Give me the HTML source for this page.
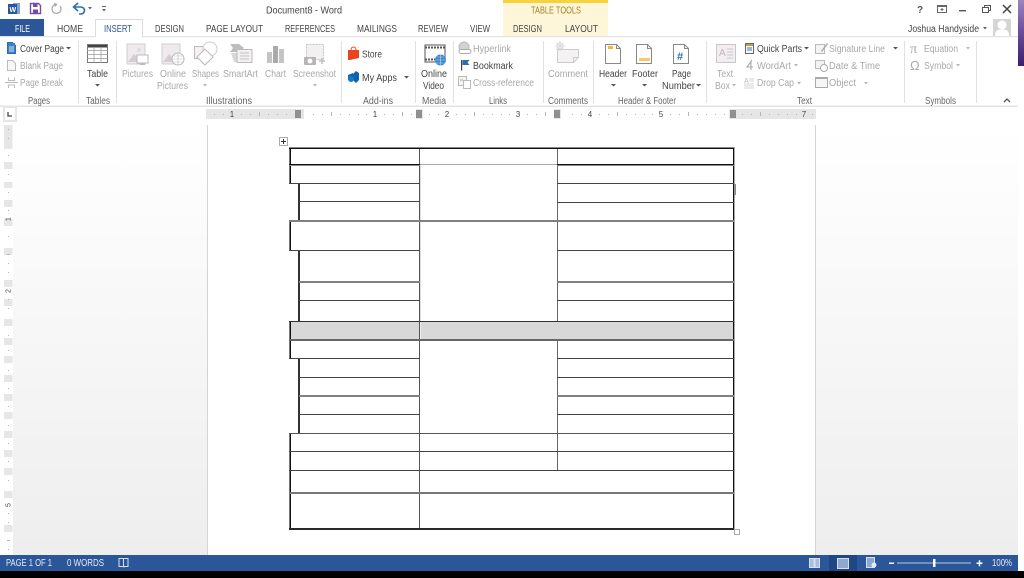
<!DOCTYPE html>
<html><head><meta charset="utf-8"><title>Document8 - Word</title>
<style>
html,body{margin:0;padding:0;background:#fff;width:1024px;height:578px;overflow:hidden}
svg{display:block;position:absolute;left:0;top:0;filter:blur(.3px)}
text{font-family:"Liberation Sans",sans-serif;font-size:10px}
.d{fill:#444}.g{fill:#a8a8a8}.l{fill:#666}.w{fill:#e4ebf5}
.c{fill:#555}.cg{fill:#b5b5b5}
</style></head><body>
<svg width="1024" height="578" viewBox="0 0 1024 578" xmlns="http://www.w3.org/2000/svg">
<defs>
<linearGradient id="bg" x1="0" y1="0" x2="0" y2="1"><stop offset="0" stop-color="#fff"/><stop offset="1" stop-color="#eee"/></linearGradient>
<linearGradient id="pur" x1="0" y1="0" x2="0" y2="1"><stop offset="0" stop-color="#9a86bd"/><stop offset=".5" stop-color="#6b4a9a"/><stop offset="1" stop-color="#3c1c6e"/></linearGradient>
</defs>
<rect width="1024" height="578" fill="#fff"/>
<rect x="1018" y="0" width="6" height="66" fill="url(#pur)"/>

<!-- doc background -->
<rect x="13" y="125" width="1005" height="430" fill="url(#bg)"/>
<rect x="207" y="125" width="609" height="430" fill="#fff"/>
<rect x="207" y="125" width="1" height="430" fill="#d4d4d4"/>
<rect x="815" y="125" width="1" height="430" fill="#d4d4d4"/>

<!-- title bar icons -->
<g>
<rect x="13" y="3" width="7" height="11" fill="#7da3d8"/><rect x="8" y="4" width="9" height="10" fill="#2b579a"/>
<text x="9.5" y="12" fill="#fff" style="font-size:7px" font-weight="bold">W</text>
<path d="M30.5 3.500h8l2 2v8h-10z" fill="none" stroke="#7a4aa8" stroke-width="1.4"/><rect x="33" y="4" width="4.500" height="3" fill="#7a4aa8"/><rect x="33" y="9.500" width="5" height="3.500" fill="#7a4aa8"/>
<path d="M60 6a4.500 4.500 0 1 1-3-1.600" fill="none" stroke="#a8a8a8" stroke-width="1.200"/><path d="M54 2.500l3.500 2-2.500 2.500z" fill="#a8a8a8"/>
<path d="M75 7h6a3.500 3.500 0 0 1 0 7h-2" fill="none" stroke="#2b6cb0" stroke-width="1.600"/><path d="M78 3l-4.500 4 4.500 4" fill="none" stroke="#2b6cb0" stroke-width="1.600"/>
<path d="M88 7h4l-2 2.500z" fill="#666"/>
<rect x="102" y="6" width="4" height="1" fill="#666"/><path d="M102 9h4l-2 2.500z" fill="#666"/>
</g>
<text class="d" x="266" y="13.500" textLength="76" lengthAdjust="spacingAndGlyphs">Document8 - Word</text>

<!-- contextual tab -->
<rect x="503" y="0" width="105" height="36" fill="#fdf6d9"/>
<rect x="503" y="0" width="105" height="3" fill="#f8d23c"/>
<text x="531" y="13.500" fill="#a5801f" textLength="50" lengthAdjust="spacingAndGlyphs">TABLE TOOLS</text>

<!-- ribbon tabs -->
<rect x="0" y="19" width="44" height="18" fill="#2b579a"/>
<text x="15" y="32" fill="#fff" textLength="15" lengthAdjust="spacingAndGlyphs">FILE</text>
<rect x="0" y="36" width="1018" height="1.200" fill="#e2e2e2"/>
<path d="M95.500 37V19.500H142.500V37" fill="#fff" stroke="#dcdcdc"/>
<rect x="96" y="36" width="46" height="2" fill="#fff"/>
<g class="d">
<text x="57" y="32" textLength="26" lengthAdjust="spacingAndGlyphs">HOME</text>
<text x="155" y="32" textLength="29" lengthAdjust="spacingAndGlyphs">DESIGN</text>
<text x="206" y="32" textLength="57" lengthAdjust="spacingAndGlyphs">PAGE LAYOUT</text>
<text x="285" y="32" textLength="50" lengthAdjust="spacingAndGlyphs">REFERENCES</text>
<text x="357" y="32" textLength="40" lengthAdjust="spacingAndGlyphs">MAILINGS</text>
<text x="418" y="32" textLength="30" lengthAdjust="spacingAndGlyphs">REVIEW</text>
<text x="470" y="32" textLength="20" lengthAdjust="spacingAndGlyphs">VIEW</text>
<text x="513" y="32" textLength="29" lengthAdjust="spacingAndGlyphs">DESIGN</text>
<text x="565" y="32" textLength="33" lengthAdjust="spacingAndGlyphs">LAYOUT</text>
<text x="908" y="32" textLength="71" lengthAdjust="spacingAndGlyphs">Joshua Handyside</text>
</g>
<text x="104" y="32" fill="#2b579a" textLength="28" lengthAdjust="spacingAndGlyphs">INSERT</text>

<!-- window controls -->
<text x="917" y="13" fill="#555" font-weight="bold" style="font-size:10px">?</text>
<rect x="937.500" y="5.500" width="9" height="7" fill="none" stroke="#666"/><rect x="937" y="5" width="10" height="2" fill="#666"/><path d="M942 8v3M940.500 9.500h3" stroke="#666"/>
<rect x="959" y="10" width="7" height="1.400" fill="#555"/>
<path d="M982.500 7.500h6v5h-6zM984.500 7.500v-2h6v5h-2" fill="none" stroke="#555"/>
<path d="M1003 5l8 8M1011 5l-8 8" stroke="#444" stroke-width="1.500"/>
<path d="M983 27h4l-2 2.500z" fill="#666"/>
<rect x="993" y="19" width="18" height="17" fill="#d5d5d5"/>
<circle cx="1002" cy="25" r="4.500" fill="#fff"/><path d="M995 36c0-6 3-6.500 7-6.500s7 .5 7 6.500z" fill="#fff"/>

<!-- ribbon bottom -->
<rect x="0" y="105.500" width="1018" height="1.500" fill="#e3e3e3"/>
<g fill="#e1e1e1">
<rect x="78" y="41" width="1" height="62"/><rect x="116" y="41" width="1" height="62"/><rect x="341" y="41" width="1" height="62"/><rect x="415" y="41" width="1" height="62"/><rect x="453" y="41" width="1" height="62"/><rect x="543" y="41" width="1" height="62"/><rect x="593" y="41" width="1" height="62"/><rect x="706" y="41" width="1" height="62"/><rect x="904" y="41" width="1" height="62"/><rect x="976" y="41" width="1" height="62"/>
</g>

<!-- group labels -->
<g class="l">
<text x="28" y="104" textLength="22" lengthAdjust="spacingAndGlyphs">Pages</text>
<text x="86" y="104" textLength="24" lengthAdjust="spacingAndGlyphs">Tables</text>
<text x="206" y="104" textLength="46" lengthAdjust="spacingAndGlyphs">Illustrations</text>
<text x="363" y="104" textLength="30" lengthAdjust="spacingAndGlyphs">Add-ins</text>
<text x="422" y="104" textLength="24" lengthAdjust="spacingAndGlyphs">Media</text>
<text x="489" y="104" textLength="18" lengthAdjust="spacingAndGlyphs">Links</text>
<text x="548" y="104" textLength="40" lengthAdjust="spacingAndGlyphs">Comments</text>
<text x="618" y="104" textLength="58" lengthAdjust="spacingAndGlyphs">Header &amp; Footer</text>
<text x="797" y="104" textLength="15" lengthAdjust="spacingAndGlyphs">Text</text>
<text x="925" y="104" textLength="31" lengthAdjust="spacingAndGlyphs">Symbols</text>
</g>
<path d="M1004 102l3-3 3 3" fill="none" stroke="#555" stroke-width="1.300"/>

<!-- ribbon text -->
<g class="d">
<text x="20" y="52" textLength="44" lengthAdjust="spacingAndGlyphs">Cover Page</text>
<text x="87" y="77" textLength="21" lengthAdjust="spacingAndGlyphs">Table</text>
<text x="362" y="57.500" textLength="20" lengthAdjust="spacingAndGlyphs">Store</text>
<text x="362" y="81" textLength="35" lengthAdjust="spacingAndGlyphs">My Apps</text>
<text x="421" y="77" textLength="26" lengthAdjust="spacingAndGlyphs">Online</text>
<text x="423" y="89" textLength="21" lengthAdjust="spacingAndGlyphs">Video</text>
<text x="473" y="69" textLength="40" lengthAdjust="spacingAndGlyphs">Bookmark</text>
<text x="599" y="77" textLength="28" lengthAdjust="spacingAndGlyphs">Header</text>
<text x="632" y="77" textLength="26" lengthAdjust="spacingAndGlyphs">Footer</text>
<text x="672" y="77" textLength="19" lengthAdjust="spacingAndGlyphs">Page</text>
<text x="662" y="89" textLength="33" lengthAdjust="spacingAndGlyphs">Number</text>
<text x="757" y="52" textLength="45" lengthAdjust="spacingAndGlyphs">Quick Parts</text>
</g>
<g class="g">
<text x="20" y="69" textLength="43" lengthAdjust="spacingAndGlyphs">Blank Page</text>
<text x="20" y="86" textLength="43" lengthAdjust="spacingAndGlyphs">Page Break</text>
<text x="122" y="77" textLength="31" lengthAdjust="spacingAndGlyphs">Pictures</text>
<text x="160" y="77" textLength="26" lengthAdjust="spacingAndGlyphs">Online</text>
<text x="157" y="89" textLength="31" lengthAdjust="spacingAndGlyphs">Pictures</text>
<text x="192" y="77" textLength="27" lengthAdjust="spacingAndGlyphs">Shapes</text>
<text x="223" y="77" textLength="35" lengthAdjust="spacingAndGlyphs">SmartArt</text>
<text x="265" y="77" textLength="21" lengthAdjust="spacingAndGlyphs">Chart</text>
<text x="293" y="77" textLength="43" lengthAdjust="spacingAndGlyphs">Screenshot</text>
<text x="473" y="52" textLength="38" lengthAdjust="spacingAndGlyphs">Hyperlink</text>
<text x="473" y="86" textLength="61" lengthAdjust="spacingAndGlyphs">Cross-reference</text>
<text x="548" y="77" textLength="40" lengthAdjust="spacingAndGlyphs">Comment</text>
<text x="717" y="77" textLength="16" lengthAdjust="spacingAndGlyphs">Text</text>
<text x="715" y="89" textLength="15" lengthAdjust="spacingAndGlyphs">Box</text>
<text x="757" y="69" textLength="34" lengthAdjust="spacingAndGlyphs">WordArt</text>
<text x="757" y="86" textLength="37" lengthAdjust="spacingAndGlyphs">Drop Cap</text>
<text x="829" y="52" textLength="56" lengthAdjust="spacingAndGlyphs">Signature Line</text>
<text x="829" y="69" textLength="51" lengthAdjust="spacingAndGlyphs">Date &amp; Time</text>
<text x="829" y="86" textLength="27" lengthAdjust="spacingAndGlyphs">Object</text>
<text x="924" y="52" textLength="34" lengthAdjust="spacingAndGlyphs">Equation</text>
<text x="924" y="69" textLength="29" lengthAdjust="spacingAndGlyphs">Symbol</text>
</g>

<!-- carets -->
<g class="c">
<path d="M66 47h5l-2.500 2.500z"/><path d="M95 84h5l-2.500 2.500z"/><path d="M404 76h5l-2.500 2.500z"/><path d="M611 84h5l-2.500 2.500z"/><path d="M642 84h5l-2.500 2.500z"/><path d="M696 84h5l-2.500 2.500z"/><path d="M804 47h5l-2.500 2.500z"/><path d="M893 47h5l-2.500 2.500z"/>
</g>
<g class="cg">
<path d="M203 84h4l-2 2.500z"/><path d="M313 84h4l-2 2.500z"/><path d="M732 84h4l-2 2.500z"/><path d="M794 64h4l-2 2.500z"/><path d="M797 82h4l-2 2.500z"/><path d="M864 82h4l-2 2.500z"/><path d="M966 47h4l-2 2.500z"/><path d="M956 64h4l-2 2.500z"/>
</g>

<!-- Pages icons -->
<path d="M7.500 42.500h5l3 3v8h-8z" fill="#fff" stroke="#2b6cb0"/><rect x="8" y="43" width="7" height="10" fill="#3f7fc4"/><path d="M9 47h5M9 49h5M9 51h5" stroke="#fff" stroke-width=".8"/>
<path d="M7.500 60.500h5l3 3v7h-8z" fill="#f7f7f7" stroke="#bbb"/>
<path d="M8.500 77.500v3h6v-3M8.500 88v-3h6v3M5 82.500h13" fill="none" stroke="#bbb"/>

<!-- Table icon -->
<rect x="87" y="44" width="21" height="3.500" fill="#444"/>
<rect x="87.500" y="44.500" width="20" height="18" fill="none" stroke="#777"/>
<path d="M87 50.500h21M87 54.500h21M87 58.500h21M94 47v16M101 47v16" stroke="#999" stroke-width=".7"/>

<!-- Pictures -->
<rect x="127" y="44" width="18" height="20" fill="#f0e9ee" stroke="#cfcfcf"/><circle cx="139" cy="50" r="2" fill="#ddd"/><path d="M128 62l6-8 5 5 3-2 3 3v2z" fill="#d5cdd2"/><rect x="137" y="55" width="11" height="8" fill="#fff" stroke="#bbb"/><rect x="140" y="63" width="5" height="2" fill="#bbb"/>
<rect x="162" y="44" width="18" height="20" fill="#f0e9ee" stroke="#cfcfcf"/><path d="M163 62l6-8 5 5 3-2 3 3v2z" fill="#d5cdd2"/><circle cx="178" cy="59" r="6" fill="#fff" stroke="#bbb"/><path d="M172 59h12M178 53v12M173.500 56h9M173.500 62h9" stroke="#bbb" stroke-width=".6" fill="none"/>
<!-- Shapes -->
<rect x="194.500" y="46.500" width="12" height="12" fill="#f5f0f3" stroke="#bbb"/><circle cx="210" cy="49" r="7" fill="#fff" stroke="#ccc"/><path d="M205 49l8 8-8 8-8-8z" fill="#fff" stroke="#bbb"/>
<!-- SmartArt -->
<path d="M230 44h9l5 4-5 4h-9l3-4z" fill="#bdbdbd"/><path d="M231 53h8l4-3v12h-9z" fill="#d8d8d8"/><rect x="237" y="49.500" width="15" height="13" fill="#f3f0f2" stroke="#bbb"/><path d="M240 53h9M240 56h9M240 59h9" stroke="#c5c5c5"/>
<!-- Chart -->
<rect x="267" y="52" width="5" height="11" fill="#c4c4c4"/><rect x="273" y="46" width="5" height="17" fill="#aaa"/><rect x="279" y="49" width="5" height="14" fill="#c4c4c4"/>
<!-- Screenshot -->
<rect x="306.500" y="44.500" width="17" height="15" fill="#f3f0f2" stroke="#c4c4c4" stroke-dasharray="2 1"/><rect x="304" y="57" width="12" height="8" rx="1" fill="#b5b5b5"/><circle cx="310" cy="61" r="2.500" fill="#fff"/><path d="M319 61h6M322 58v6" stroke="#b5b5b5" stroke-width="1.300"/>
<!-- Store -->
<path d="M348 50h11v8l-9 2h-2z" fill="#e8451f"/><path d="M351 50c0-4 5-4 5 0" fill="none" stroke="#e8451f"/>
<!-- My Apps -->
<path d="M348 75l5-2v5l-5 2zM353 74l3-3 3 2v7l-3 3-3-3z" fill="#0f62ad"/><circle cx="351" cy="79" r="3" fill="#1578c8"/>
<!-- Online Video -->
<rect x="425" y="45" width="20" height="17" fill="#fff" stroke="#555"/><path d="M425 47.500h20M425 59.500h20" stroke="#555" stroke-width="2" stroke-dasharray="2 1"/>
<circle cx="440.500" cy="60" r="5.500" fill="#3b87cf"/><path d="M435 60h11M440.500 54.500v11M436.500 57h8M436.500 63h8" stroke="#bcdcf6" stroke-width=".6"/>
<!-- Links -->
<circle cx="464" cy="47" r="5" fill="#d3d3d3" stroke="#bbb"/><rect x="459" y="49.500" width="12" height="4" rx="2" fill="#fff" stroke="#aaa"/>
<rect x="461" y="60" width="1.200" height="10.500" fill="#444"/><path d="M462.500 60h7l-2 2.500 2 2.500h-7z" fill="#2b6cb0"/>
<rect x="458.500" y="76.500" width="8" height="9" fill="#f3f3f3" stroke="#bbb"/><rect x="463.500" y="80.500" width="7" height="8" fill="#fff" stroke="#bbb"/><path d="M460 80h3" stroke="#aaa"/>
<!-- Comment -->
<path d="M557.500 49.500h21v8l-5 5h-16z" fill="#f5f2f4" stroke="#ccc"/><path d="M573.500 62.500v-5h5" fill="none" stroke="#ccc"/>
<circle cx="560" cy="46" r="3" fill="#fff" stroke="#d8d8d8"/><path d="M560 41v10M555 46h10M556.500 42.500l7 7M563.500 42.500l-7 7" stroke="#d8d8d8" stroke-width=".8"/>
<!-- Header/Footer/Page Number -->
<path d="M605.500 44.500h11l4 4v15h-15z" fill="#fff" stroke="#888"/><path d="M616.500 44.500v4h4" fill="none" stroke="#888"/><rect x="608" y="46" width="5" height="3" fill="#f3b83c"/>
<path d="M636.500 44.500h11l4 4v15h-15z" fill="#fff" stroke="#888"/><path d="M647.500 44.500v4h4" fill="none" stroke="#888"/><rect x="639" y="58" width="11" height="3" fill="#f3c96a"/>
<path d="M673.500 44.500h11l4 4v15h-15z" fill="#fff" stroke="#888"/><path d="M684.500 44.500v4h4" fill="none" stroke="#888"/><text x="677" y="60" fill="#2b6cb0" font-weight="bold" style="font-size:11px">#</text>
<!-- Text Box -->
<rect x="716.500" y="44.500" width="19" height="18" fill="#f3ecf0" stroke="#c8c8c8"/><text x="719" y="56" fill="#c4b6be" style="font-size:10px">A</text><path d="M727 49h6M727 52h6M727 55h6M727 58h6" stroke="#ccc"/>
<!-- Quick Parts etc -->
<rect x="745.500" y="43.500" width="8" height="10" fill="#f8f8f8" stroke="#667"/><rect x="746" y="44" width="7" height="2" fill="#c99a3a"/><path d="M747 48h5M747 50h5" stroke="#3b7ab8"/>
<path d="M752 60l-5 7h6M751 61v9" fill="none" stroke="#aaa" stroke-width="1.100"/>
<text x="744" y="83" fill="#bbb" style="font-size:7px">A</text><path d="M749 79h5M749 81h5M744 84h10M744 86h10M744 88h10" stroke="#c8c8c8" stroke-width=".8"/>
<rect x="815.500" y="44.500" width="9" height="9" fill="#f5f2f4" stroke="#bbb"/><path d="M821 51l6-8 1 1-6 8z" fill="#aaa"/>
<rect x="815.500" y="60.500" width="9" height="8" fill="#f3f3f3" stroke="#bbb"/><circle cx="824" cy="68" r="3.500" fill="#fff" stroke="#aaa"/>
<rect x="815.500" y="77.500" width="12" height="10" fill="#f5f5f5" stroke="#aaa"/><rect x="815" y="77" width="13" height="2" fill="#aaa"/>
<text x="910" y="53" fill="#aaa" style="font-size:14px;font-family:'Liberation Serif',serif">π</text>
<text x="910" y="70" fill="#aaa" style="font-size:13px">Ω</text>

<!-- horizontal ruler -->
<rect x="206" y="109" width="610" height="10" fill="#e6e6e6"/>
<rect x="304" y="109" width="112" height="10" fill="#fff"/><rect x="423" y="109" width="131" height="10" fill="#fff"/><rect x="561" y="109" width="168" height="10" fill="#fff"/>
<g fill="#909090"><rect x="295" y="110" width="6" height="8"/><rect x="416" y="110" width="6" height="8"/><rect x="554" y="110" width="6" height="8"/><rect x="730" y="110" width="6" height="8"/></g>
<g fill="#b5b5b5">
<rect x="214" y="114" width="1" height="1"/><rect x="223" y="114" width="1" height="1"/><rect x="241" y="114" width="1" height="1"/><rect x="250" y="114" width="1" height="1"/><rect x="259" y="112" width="1" height="4"/><rect x="268" y="114" width="1" height="1"/><rect x="277" y="114" width="1" height="1"/><rect x="286" y="114" width="1" height="1"/>
<rect x="313" y="114" width="1" height="1"/><rect x="322" y="114" width="1" height="1"/><rect x="331" y="112" width="1" height="4"/><rect x="340" y="114" width="1" height="1"/><rect x="349" y="114" width="1" height="1"/><rect x="358" y="114" width="1" height="1"/><rect x="366" y="114" width="1" height="1"/><rect x="384" y="114" width="1" height="1"/><rect x="393" y="114" width="1" height="1"/><rect x="402" y="112" width="1" height="4"/><rect x="411" y="114" width="1" height="1"/>
<rect x="429" y="114" width="1" height="1"/><rect x="438" y="114" width="1" height="1"/><rect x="456" y="114" width="1" height="1"/><rect x="465" y="114" width="1" height="1"/><rect x="474" y="112" width="1" height="4"/><rect x="483" y="114" width="1" height="1"/><rect x="492" y="114" width="1" height="1"/><rect x="501" y="114" width="1" height="1"/><rect x="509" y="114" width="1" height="1"/><rect x="527" y="114" width="1" height="1"/><rect x="536" y="114" width="1" height="1"/><rect x="545" y="112" width="1" height="4"/>
<rect x="572" y="114" width="1" height="1"/><rect x="581" y="114" width="1" height="1"/><rect x="599" y="114" width="1" height="1"/><rect x="608" y="114" width="1" height="1"/><rect x="617" y="112" width="1" height="4"/><rect x="626" y="114" width="1" height="1"/><rect x="635" y="114" width="1" height="1"/><rect x="644" y="114" width="1" height="1"/><rect x="652" y="114" width="1" height="1"/><rect x="670" y="114" width="1" height="1"/><rect x="679" y="114" width="1" height="1"/><rect x="688" y="112" width="1" height="4"/><rect x="697" y="114" width="1" height="1"/><rect x="706" y="114" width="1" height="1"/><rect x="715" y="114" width="1" height="1"/><rect x="724" y="114" width="1" height="1"/>
<rect x="742" y="114" width="1" height="1"/><rect x="751" y="114" width="1" height="1"/><rect x="760" y="112" width="1" height="4"/><rect x="769" y="114" width="1" height="1"/><rect x="778" y="114" width="1" height="1"/><rect x="787" y="114" width="1" height="1"/><rect x="796" y="114" width="1" height="1"/><rect x="812" y="114" width="1" height="1"/>
</g>
<g fill="#444" text-anchor="middle">
<text x="232" y="117" style="font-size:8px">1</text><text x="375" y="117" style="font-size:8px">1</text><text x="447" y="117" style="font-size:8px">2</text><text x="518" y="117" style="font-size:8px">3</text><text x="590" y="117" style="font-size:8px">4</text><text x="661" y="117" style="font-size:8px">5</text><text x="804" y="117" style="font-size:8px">7</text>
</g>
<!-- tab selector -->
<rect x="3" y="106" width="14" height="16" fill="#e6e6e6"/><rect x="5" y="108" width="10" height="12" fill="#fff"/>
<path d="M8 112v4h4" fill="none" stroke="#444" stroke-width="1.300"/>

<!-- vertical ruler -->
<rect x="4" y="125" width="8.500" height="430" fill="#e6e6e6"/>
<g fill="#fff">
<rect x="4" y="149" width="8.500" height="13"/><rect x="4" y="169" width="8.500" height="13"/><rect x="4" y="188" width="8.500" height="12"/><rect x="4" y="207" width="8.500" height="12"/><rect x="4" y="226" width="8.500" height="22"/><rect x="4" y="255" width="8.500" height="25"/><rect x="4" y="287" width="8.500" height="12"/><rect x="4" y="306" width="8.500" height="13"/><rect x="4" y="326" width="8.500" height="12"/><rect x="4" y="345" width="8.500" height="11"/><rect x="4" y="363" width="8.500" height="12"/><rect x="4" y="382" width="8.500" height="12"/><rect x="4" y="401" width="8.500" height="11"/><rect x="4" y="419" width="8.500" height="12"/><rect x="4" y="438" width="8.500" height="12"/><rect x="4" y="457" width="8.500" height="11"/><rect x="4" y="475" width="8.500" height="16"/><rect x="4" y="498" width="8.500" height="27"/><rect x="4" y="532" width="8.500" height="23"/>
</g>
<g fill="#b5b5b5">
<rect x="8" y="129" width="1" height="1"/><rect x="8" y="138" width="1" height="1"/><rect x="8" y="155" width="1" height="1"/><rect x="8" y="174" width="1" height="1"/><rect x="8" y="192" width="1" height="1"/><rect x="8" y="210" width="1" height="1"/><rect x="8" y="236" width="1" height="1"/><rect x="7" y="254" width="3" height="1"/><rect x="8" y="263" width="1" height="1"/><rect x="8" y="272" width="1" height="1"/><rect x="8" y="299" width="1" height="1"/><rect x="8" y="308" width="1" height="1"/><rect x="8" y="335" width="1" height="1"/><rect x="8" y="350" width="1" height="1"/><rect x="8" y="370" width="1" height="1"/><rect x="8" y="388" width="1" height="1"/><rect x="8" y="406" width="1" height="1"/><rect x="8" y="425" width="1" height="1"/><rect x="8" y="443" width="1" height="1"/><rect x="8" y="461" width="1" height="1"/><rect x="8" y="480" width="1" height="1"/><rect x="8" y="513" width="1" height="1"/><rect x="8" y="522" width="1" height="1"/><rect x="7" y="540" width="3" height="1"/><rect x="8" y="549" width="1" height="1"/>
</g>
<g fill="#444">
<text transform="translate(10.500 221) rotate(-90)" style="font-size:7px">1</text>
<text transform="translate(10.500 293) rotate(-90)" style="font-size:7px">2</text>
<text transform="translate(10.500 507) rotate(-90)" style="font-size:7px">5</text>
</g>

<!-- table -->
<rect x="291" y="322" width="442" height="18" fill="#d8d8d8"/>
<rect x="420" y="322" width="1" height="18" fill="#eee"/>
<g shape-rendering="crispEdges">
<!-- left outer: gray + dark -->
<g fill="#777"><rect x="289" y="147" width="1" height="37"/><rect x="289" y="221" width="1" height="30"/><rect x="289" y="321" width="1" height="38"/><rect x="289" y="433" width="1" height="97"/></g>
<g fill="#111"><rect x="290" y="148" width="1" height="36"/><rect x="290" y="221" width="1" height="30"/><rect x="290" y="321" width="1" height="38"/><rect x="290" y="433" width="1" height="96"/></g>
<g fill="#333"><rect x="298" y="183" width="2" height="38"/><rect x="298" y="250" width="2" height="71"/><rect x="298" y="358" width="2" height="75"/></g>
<rect x="419" y="148" width="1" height="381" fill="#555"/>
<rect x="420" y="165" width="1" height="156" fill="#ddd"/>
<rect x="557" y="148" width="1" height="173" fill="#666"/><rect x="557" y="340" width="1" height="131" fill="#666"/>
<rect x="733" y="148" width="1" height="381" fill="#111"/>
<rect x="734" y="147" width="1" height="383" fill="#aaa"/>
<!-- horizontals -->
<rect x="289" y="147" width="445" height="1" fill="#888"/><rect x="289" y="148" width="445" height="1" fill="#111"/>
<rect x="289" y="164" width="131" height="1" fill="#111"/><rect x="289" y="165" width="131" height="1" fill="#888"/><rect x="420" y="164" width="137" height="1" fill="#aaa"/><rect x="557" y="164" width="177" height="1" fill="#111"/><rect x="557" y="165" width="177" height="1" fill="#888"/>
<rect x="289" y="183" width="131" height="1" fill="#444"/><rect x="557" y="183" width="177" height="1" fill="#444"/>
<rect x="299" y="201" width="121" height="1" fill="#444"/><rect x="557" y="202" width="177" height="1" fill="#444"/>
<rect x="289" y="220" width="445" height="2" fill="#808080"/>
<rect x="289" y="250" width="131" height="1" fill="#444"/><rect x="557" y="250" width="177" height="1" fill="#444"/>
<rect x="299" y="281" width="121" height="2" fill="#808080"/><rect x="557" y="281" width="177" height="2" fill="#808080"/>
<rect x="299" y="300" width="121" height="1" fill="#444"/><rect x="557" y="300" width="177" height="1" fill="#444"/>
<rect x="289" y="321" width="445" height="1" fill="#333"/>
<rect x="289" y="339" width="445" height="2" fill="#666"/>
<rect x="289" y="358" width="131" height="1" fill="#444"/><rect x="557" y="358" width="177" height="1" fill="#444"/>
<rect x="299" y="377" width="121" height="1" fill="#444"/><rect x="557" y="377" width="177" height="1" fill="#444"/>
<rect x="299" y="395" width="121" height="2" fill="#808080"/><rect x="557" y="395" width="177" height="2" fill="#808080"/>
<rect x="299" y="414" width="121" height="1" fill="#444"/><rect x="557" y="414" width="177" height="1" fill="#444"/>
<rect x="289" y="433" width="445" height="1" fill="#555"/>
<rect x="289" y="451" width="445" height="1" fill="#444"/>
<rect x="289" y="470" width="445" height="1" fill="#444"/>
<rect x="289" y="492" width="445" height="2" fill="#777"/>
<rect x="289" y="528" width="445" height="2" fill="#2a2a2a"/>
</g>
<rect x="734.500" y="184" width="1.500" height="11" fill="#888"/>
<rect x="734.500" y="529.500" width="5" height="5" fill="#fff" stroke="#aaa"/>
<rect x="279.500" y="137.500" width="8" height="8" fill="#fff" stroke="#aaa"/>
<path d="M283.500 139v5M281 141.500h5" stroke="#333"/>

<!-- status bar -->
<rect x="0" y="555" width="1018" height="16" fill="#2b579a"/>
<rect x="0" y="571" width="1024" height="7" fill="#000"/>
<rect x="829" y="555" width="28" height="16" fill="#1f4785"/>
<g class="w">
<text x="6" y="566" textLength="46" lengthAdjust="spacingAndGlyphs">PAGE 1 OF 1</text>
<text x="67" y="566" textLength="37" lengthAdjust="spacingAndGlyphs">0 WORDS</text>
<text x="992" y="566" textLength="20" lengthAdjust="spacingAndGlyphs">100%</text>
</g>
<path d="M119 558.500h4.500v8H119zM123.500 558.500h4.500v8h-4.500M124 567.500v-1" fill="none" stroke="#d5e0f0"/>
<path d="M809.500 558.500h4.500v9h-4.500zM815 558.500h4.500v9H815z" fill="#a9bedc" stroke="#d5e0f0"/>
<rect x="837.500" y="558.500" width="11" height="10" fill="#8ea8cf" stroke="#d5e0f0"/>
<rect x="866.500" y="557.500" width="8" height="10" fill="#8ea8cf" stroke="#d5e0f0"/><circle cx="874" cy="565" r="2.500" fill="#e4ebf5"/>
<rect x="889" y="562.500" width="5" height="1.500" fill="#fff"/>
<rect x="897" y="562.500" width="74" height="1" fill="#b9cae3"/>
<rect x="933" y="559" width="2.500" height="8" fill="#fff"/>
<path d="M976.500 563.200h6M979.500 560.200v6" stroke="#fff" stroke-width="1.500"/>
</svg>
</body></html>
